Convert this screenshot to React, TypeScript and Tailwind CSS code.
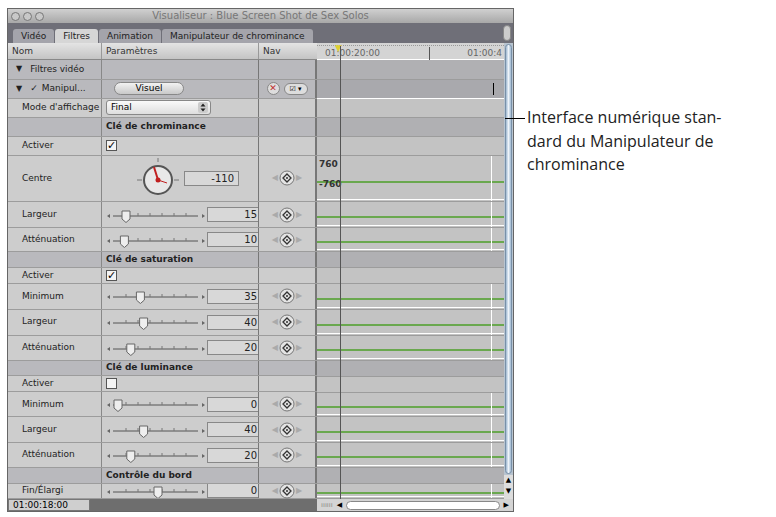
import React from "react";

type Row = { h: number; kind: string; name?: string; val?: string; pos?: number; section?: string; checked?: boolean };

const rows: Row[] = [
  { h: 20, kind: "group", name: "Filtres vidéo" },
  { h: 19, kind: "filter" },
  { h: 19, kind: "mode", name: "Mode d'affichage" },
  { h: 19, kind: "section", section: "Clé de chrominance" },
  { h: 19, kind: "check", name: "Activer", checked: true },
  { h: 47, kind: "angle", name: "Centre", val: "-110" },
  { h: 26, kind: "slider", name: "Largeur", val: "15", pos: 0.1 },
  { h: 24, kind: "slider", name: "Atténuation", val: "10", pos: 0.08 },
  { h: 16, kind: "section", section: "Clé de saturation" },
  { h: 16, kind: "check", name: "Activer", checked: true },
  { h: 26, kind: "slider", name: "Minimum", val: "35", pos: 0.28 },
  { h: 26, kind: "slider", name: "Largeur", val: "40", pos: 0.32 },
  { h: 25, kind: "slider", name: "Atténuation", val: "20", pos: 0.16 },
  { h: 16, kind: "section", section: "Clé de luminance" },
  { h: 16, kind: "check", name: "Activer", checked: false },
  { h: 25, kind: "slider", name: "Minimum", val: "0", pos: 0.0 },
  { h: 26, kind: "slider", name: "Largeur", val: "40", pos: 0.32 },
  { h: 25, kind: "slider", name: "Atténuation", val: "20", pos: 0.16 },
  { h: 16, kind: "section", section: "Contrôle du bord" },
  { h: 15, kind: "slider", name: "Fin/Élargi", val: "0", pos: 0.5 },
];

const Slider = ({ pos }: { pos: number }) => (
  <svg width="100" height="16" viewBox="0 0 100 16">
    <path d="M1 9 L4 7 L4 11 Z" fill="#666" />
    <path d="M99 9 L96 7 L96 11 Z" fill="#666" />
    <line x1="7" y1="9" x2="92" y2="9" stroke="#555" strokeWidth="1" />
    {[20, 32, 44, 56, 68, 80].map((x) => (
      <line key={x} x1={x} y1="6" x2={x} y2="9" stroke="#777" />
    ))}
    <path d={`M${8 + pos * 80} 4 h8 v8 l-4 3.5 l-4 -3.5 Z`} fill="#eee" stroke="#666" />
  </svg>
);

const Nav = () => (
  <div className="flex items-center gap-[1px]">
    <span className="text-[8px] text-[#aaa]">◀</span>
    <svg width="16" height="16" viewBox="0 0 16 16">
      <circle cx="8" cy="8" r="7" fill="#e4e4e4" stroke="#777" />
      <path d="M8 4 L12 8 L8 12 L4 8 Z" fill="none" stroke="#333" strokeWidth="1.3" />
      <circle cx="8" cy="8" r="1" fill="#333" />
    </svg>
    <span className="text-[8px] text-[#aaa]">▶</span>
  </div>
);

const ValBox = ({ v }: { v: string }) => (
  <div className="w-[55px] h-[15px] bg-[#d8d8d8] border border-[#888] text-right pr-1 text-[10px] leading-[13px] text-[#222]">{v}</div>
);

function Left({ r }: { r: Row }) {
  const dark = r.kind === "group" || r.kind === "filter" || r.kind === "section";
  const bg = dark ? "bg-[#b9b9bd]" : "bg-[#cdcdcd]";
  return (
    <div className={`flex border-b border-[#9c9c9c] ${bg}`} style={{ height: r.h }}>
      <div className="w-[94px] border-r border-[#888] flex items-center pl-2 text-[#222] overflow-hidden whitespace-nowrap">
        {r.kind === "group" && (<><span className="text-[8px] mr-2">▼</span>Filtres vidéo</>)}
        {r.kind === "filter" && (<><span className="text-[8px] mr-2">▼</span><span className="mr-1 font-bold">✓</span>Manipul...</>)}
        {r.name && r.kind !== "group" && <span className="pl-[6px]">{r.name}</span>}
      </div>
      <div className="w-[157px] border-r border-[#777] flex items-center px-1 overflow-hidden">
        {r.kind === "filter" && (
          <div className="ml-2 w-[70px] h-[13px] rounded-full bg-gradient-to-b from-[#f2f2f2] to-[#c9c9c9] border border-[#888] text-center text-[9px] leading-[11px]">Visuel</div>
        )}
        {r.kind === "mode" && (
          <div className="w-[105px] h-[15px] rounded-[3px] bg-gradient-to-b from-[#fafafa] to-[#dedede] border border-[#888] flex items-center justify-between pl-1 pr-[2px]">
            <span>Final</span>
            <svg width="10" height="11" viewBox="0 0 10 11">
              <rect x="0" y="0" width="10" height="11" rx="2" fill="#ccc" />
              <path d="M5 1.5 L7.5 4.5 L2.5 4.5 Z M5 9.5 L7.5 6.5 L2.5 6.5 Z" fill="#222" />
            </svg>
          </div>
        )}
        {r.kind === "section" && <span className="font-bold text-[#222]">{r.section}</span>}
        {r.kind === "check" && (
          <div className="w-[11px] h-[11px] border border-[#555] bg-[#f4f4f4] text-[11px] leading-[9px] font-bold text-black">{r.checked ? "✓" : ""}</div>
        )}
        {r.kind === "slider" && (<div className="flex items-center gap-[1px]"><Slider pos={r.pos!} /><ValBox v={r.val!} /></div>)}
        {r.kind === "angle" && (
          <div className="flex items-center ml-[30px] gap-1">
            <svg width="44" height="44" viewBox="0 0 44 44">
              <line x1="1" y1="24" x2="6" y2="24" stroke="#777" />
              <line x1="38" y1="24" x2="43" y2="24" stroke="#777" />
              <line x1="22" y1="2" x2="22" y2="6" stroke="#777" />
              <circle cx="22" cy="24" r="14" fill="#e8e8e8" stroke="#555" strokeWidth="2" />
              <line x1="22" y1="24" x2="18" y2="11" stroke="#c02020" strokeWidth="2" />
              <line x1="22" y1="24" x2="31" y2="27" stroke="#c02020" strokeWidth="1" />
              <circle cx="22" cy="24" r="2.5" fill="#c02020" />
            </svg>
            <ValBox v={r.val!} />
          </div>
        )}
      </div>
      <div className="w-[58px] border-r-2 border-[#777] flex items-center justify-center">
        {(r.kind === "slider" || r.kind === "angle") && <Nav />}
        {r.kind === "filter" && (
          <div className="flex items-center gap-1">
            <div className="w-[13px] h-[13px] rounded-full bg-[#ddd] border border-[#888] text-[#c03030] text-[9px] leading-[11px] text-center font-bold">✕</div>
            <div className="w-[24px] h-[12px] rounded-full bg-[#ddd] border border-[#888] text-[7px] leading-[10px] text-center">☑ ▾</div>
          </div>
        )}
      </div>
    </div>
  );
}

function Track({ r }: { r: Row }) {
  const dark = r.kind === "group" || r.kind === "section";
  return (
    <div className={`relative border-b ${r.kind === "filter" ? "border-white bg-[#a9a9ad]" : "border-[#9c9c9c]"} ${dark ? "bg-[#b0b0b3]" : r.kind === "filter" ? "" : "bg-[#c3c3c3]"}`} style={{ height: r.h }}>
      {(r.kind === "slider" || r.kind === "angle") && (
        <>
          <div className="absolute left-0 right-0 top-[55%] h-[2px] bg-[#6aa84f]" />
          <div className="absolute left-0 right-0 bottom-[1px] h-[1px] bg-white" />
          <div className="absolute top-0 bottom-0 right-[12px] w-[1px] bg-white" />
        </>
      )}
      {r.kind === "angle" && (
        <>
          <div className="absolute left-[2px] top-[2px] text-[9px] font-bold text-[#333]">760</div>
          <div className="absolute left-[2px] top-[22px] text-[9px] font-bold text-[#333]">-760</div>
        </>
      )}
      {r.kind === "filter" && <div className="absolute top-[3px] bottom-[3px] right-[10px] w-[1px] bg-black" />}
    </div>
  );
}

export default function App() {
  return (
    <div className="w-[776px] h-[517px] bg-white relative" style={{ fontFamily: '"DejaVu Sans", sans-serif' }}>
      <div className="absolute left-[7px] top-[8px] w-[507px] h-[504px] flex flex-col border border-[#666] text-[9px] overflow-hidden bg-[#7c7c84]">
        <div className="h-[14px] bg-gradient-to-b from-[#d0d0d0] to-[#a8a8a8] flex items-center relative">
          <div className="flex gap-[3px] pl-[3px]">
            {[0, 1, 2].map((i) => <div key={i} className="w-[9px] h-[9px] rounded-full border border-[#777] bg-[#c8c8c8]" />)}
          </div>
          <div className="absolute inset-0 text-center text-[10px] leading-[14px] text-[#777]">Visualiseur : Blue Screen Shot de Sex Solos</div>
        </div>
        <div className="h-[20px] bg-[#6f6f78] flex items-end pl-[5px] gap-[1px] relative">
          {["Vidéo", "Filtres", "Animation", "Manipulateur de chrominance"].map((t) => (
            <div key={t} className={`h-[14px] px-2 rounded-t-[3px] text-[9px] leading-[14px] ${t === "Filtres" ? "bg-[#d6d6d6] text-[#222]" : "bg-[#a4a4ab] text-[#222]"}`}>{t}</div>
          ))}
          <div className="absolute right-[2px] top-[2px] w-[8px] h-[16px] rounded-full bg-[#ccc] border border-[#888]" />
        </div>
        <div className="flex flex-1 min-h-0">
          <div className="w-[309px] flex flex-col bg-[#cdcdcd]">
            <div className="h-[17px] flex bg-gradient-to-b from-[#e4e4e4] to-[#c4c4c4] border-b border-[#888] text-[#333]">
              <div className="w-[94px] border-r border-[#999] pl-1 leading-[17px]">Nom</div>
              <div className="w-[157px] border-r border-[#999] pl-1 leading-[17px]">Paramètres</div>
              <div className="w-[58px] pl-1 leading-[17px]">Nav</div>
            </div>
            {rows.map((r, i) => <Left key={i} r={r} />)}
          </div>
          <div className="flex-1 flex flex-col relative bg-[#c3c3c3]">
            <div className="h-[17px] bg-[#d4d4d4] border-b border-white relative text-[9px] text-[#666]">
              <span className="absolute left-[8px] top-[4px]">01:00:20:00</span>
              <span className="absolute right-[2px] top-[4px]">01:00:4</span>
              <div className="absolute left-[112px] top-[4px] h-[13px] w-[1px] bg-[#555]" />
              <div className="absolute left-0 right-0 top-[0px] h-[3px] border-b border-dotted border-[#999]" />
              <div className="absolute left-[18px] -top-[1px] text-[#e0d030] text-[9px]">▼</div>
            </div>
            {rows.map((r, i) => <Track key={i} r={r} />)}
            <div className="absolute left-[23px] top-[3px] bottom-0 w-[1px] bg-[#555]" />
          </div>
          <div className="w-[9px] bg-[#b8c4d0] flex flex-col">
            <div className="flex-1 m-[1px] rounded-full bg-gradient-to-r from-[#9fb8d0] via-[#eef4fa] to-[#9fb8d0] border border-[#7890a8]" />
            <div className="h-[24px] bg-[#ddd] text-[7px] text-center leading-[11px]">▲<br />▼</div>
          </div>
        </div>
        <div className="h-[12px] flex bg-[#6e6e6e] text-[9px]">
          <div className="w-[82px] bg-[#cfcfcf] border border-[#777] pl-1 leading-[10px]">01:00:18:00</div>
          <div className="w-[227px]" />
          <div className="flex-1 bg-[#d4d4d4] flex items-center gap-1 px-1 text-[7px]">
            <span className="text-[#888]">ıııııı</span><span>◀</span>
            <div className="flex-1 h-[9px] rounded-full bg-white border border-[#888]" />
            <span>▶</span>
          </div>
        </div>
      </div>
      <div className="absolute left-[505px] top-[118px] w-[20px] h-[1px] bg-black" />
      <div className="absolute left-[527px] top-[106px] w-[248px] text-[16px] leading-[23.5px] text-[#222]" style={{ fontFamily: '"Open Sans", sans-serif' }}>
        Interface numérique stan-<br />dard du Manipulateur de<br />chrominance
      </div>
    </div>
  );
}
